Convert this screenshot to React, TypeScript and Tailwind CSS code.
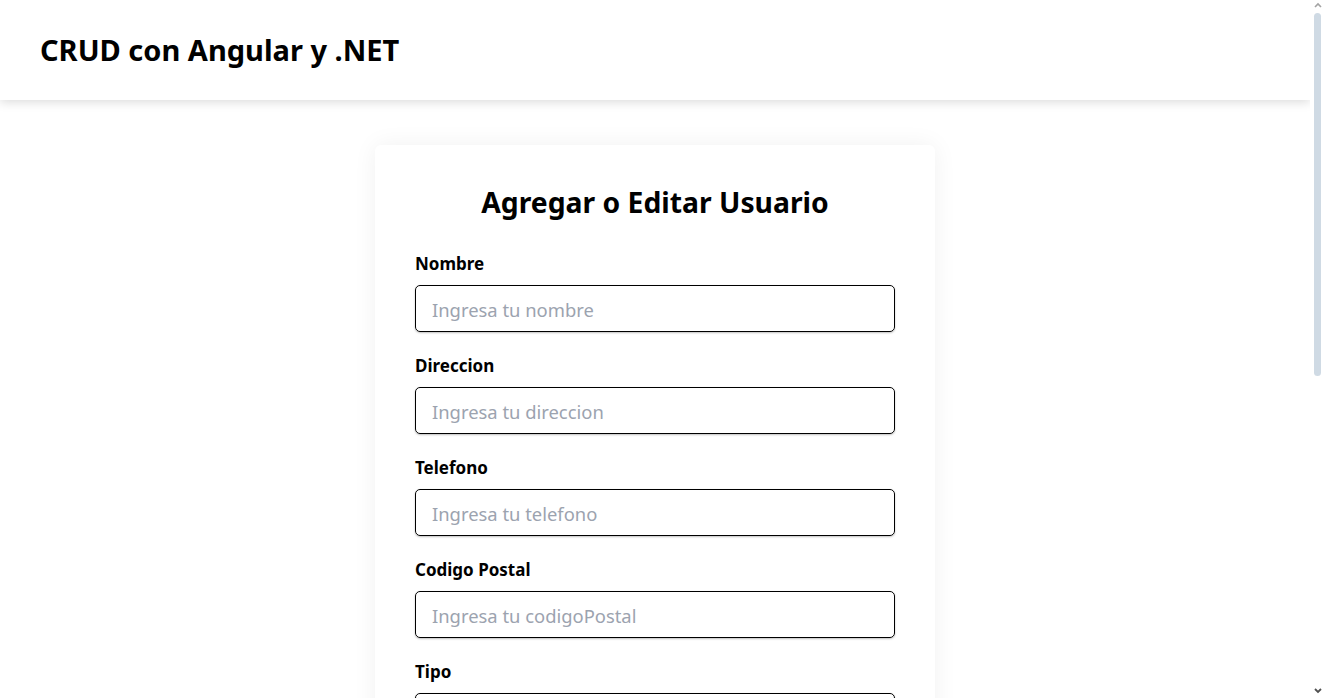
import React from "react";

const fields = [
  { label: "Nombre", placeholder: "Ingresa tu nombre" },
  { label: "Direccion", placeholder: "Ingresa tu direccion" },
  { label: "Telefono", placeholder: "Ingresa tu telefono" },
  { label: "Codigo Postal", placeholder: "Ingresa tu codigoPostal" },
];

function Scrollbar() {
  return (
    <div className="w-[15px] shrink-0 h-full bg-white flex flex-col items-center">
      <svg width="8" height="12" viewBox="0 0 8 12" className="shrink-0">
        <path d="M1 7 L4 4 L7 7" fill="none" stroke="#a3a3a3" strokeWidth="1.6" />
      </svg>
      <div className="w-[7px] h-[363px] mt-[1px] rounded-full bg-[#cfdae4]" />
      <div className="flex-1" />
      <svg width="8" height="12" viewBox="0 0 8 12" className="shrink-0">
        <path d="M1 3 L4 6 L7 3" fill="none" stroke="#505050" strokeWidth="1.8" />
      </svg>
    </div>
  );
}

export default function App() {
  return (
    <div
      className="h-screen flex overflow-hidden bg-white text-black"
      style={{ fontFamily: '"Noto Sans", "Open Sans", sans-serif' }}
    >
      <div className="flex-1 min-w-0 h-full overflow-hidden">
        <header className="h-[100px] flex items-center px-10 bg-white shadow-[0_2px_10px_rgba(0,0,0,0.15)] relative z-10">
          <h1 className="text-[29px] leading-[36px] font-bold">CRUD con Angular y .NET</h1>
        </header>
        <main className="flex justify-center pt-[45px] pb-[100px]">
          <div className="w-[560px] bg-white p-10 shadow-[0_0_24px_rgba(0,0,0,0.06)] rounded-md">
            <h2 className="text-[28.3px] leading-[34px] font-bold text-center mb-[32px]">Agregar o Editar Usuario</h2>
            {fields.map((f) => (
              <div key={f.label} className="mb-[21px]">
                <label className="block text-[17px] leading-[26px] font-bold mb-[8px]">{f.label}</label>
                <input
                  placeholder={f.placeholder}
                  className="w-full h-[47px] px-4 pt-[2px] text-[18.4px] border border-black rounded-[5px] shadow-[0_1px_2px_rgba(0,0,0,0.25)] placeholder:text-[#9ca3af] outline-none"
                />
              </div>
            ))}
            <div className="mb-5">
              <label className="block text-[17px] leading-[26px] font-bold mb-[8px]">Tipo</label>
              <select className="w-full h-[47px] px-4 text-[18.4px] border border-black rounded-[5px] shadow-[0_1px_2px_rgba(0,0,0,0.25)] bg-white outline-none">
                <option>Selecciona un tipo</option>
              </select>
            </div>
          </div>
        </main>
      </div>
      <Scrollbar />
    </div>
  );
}
